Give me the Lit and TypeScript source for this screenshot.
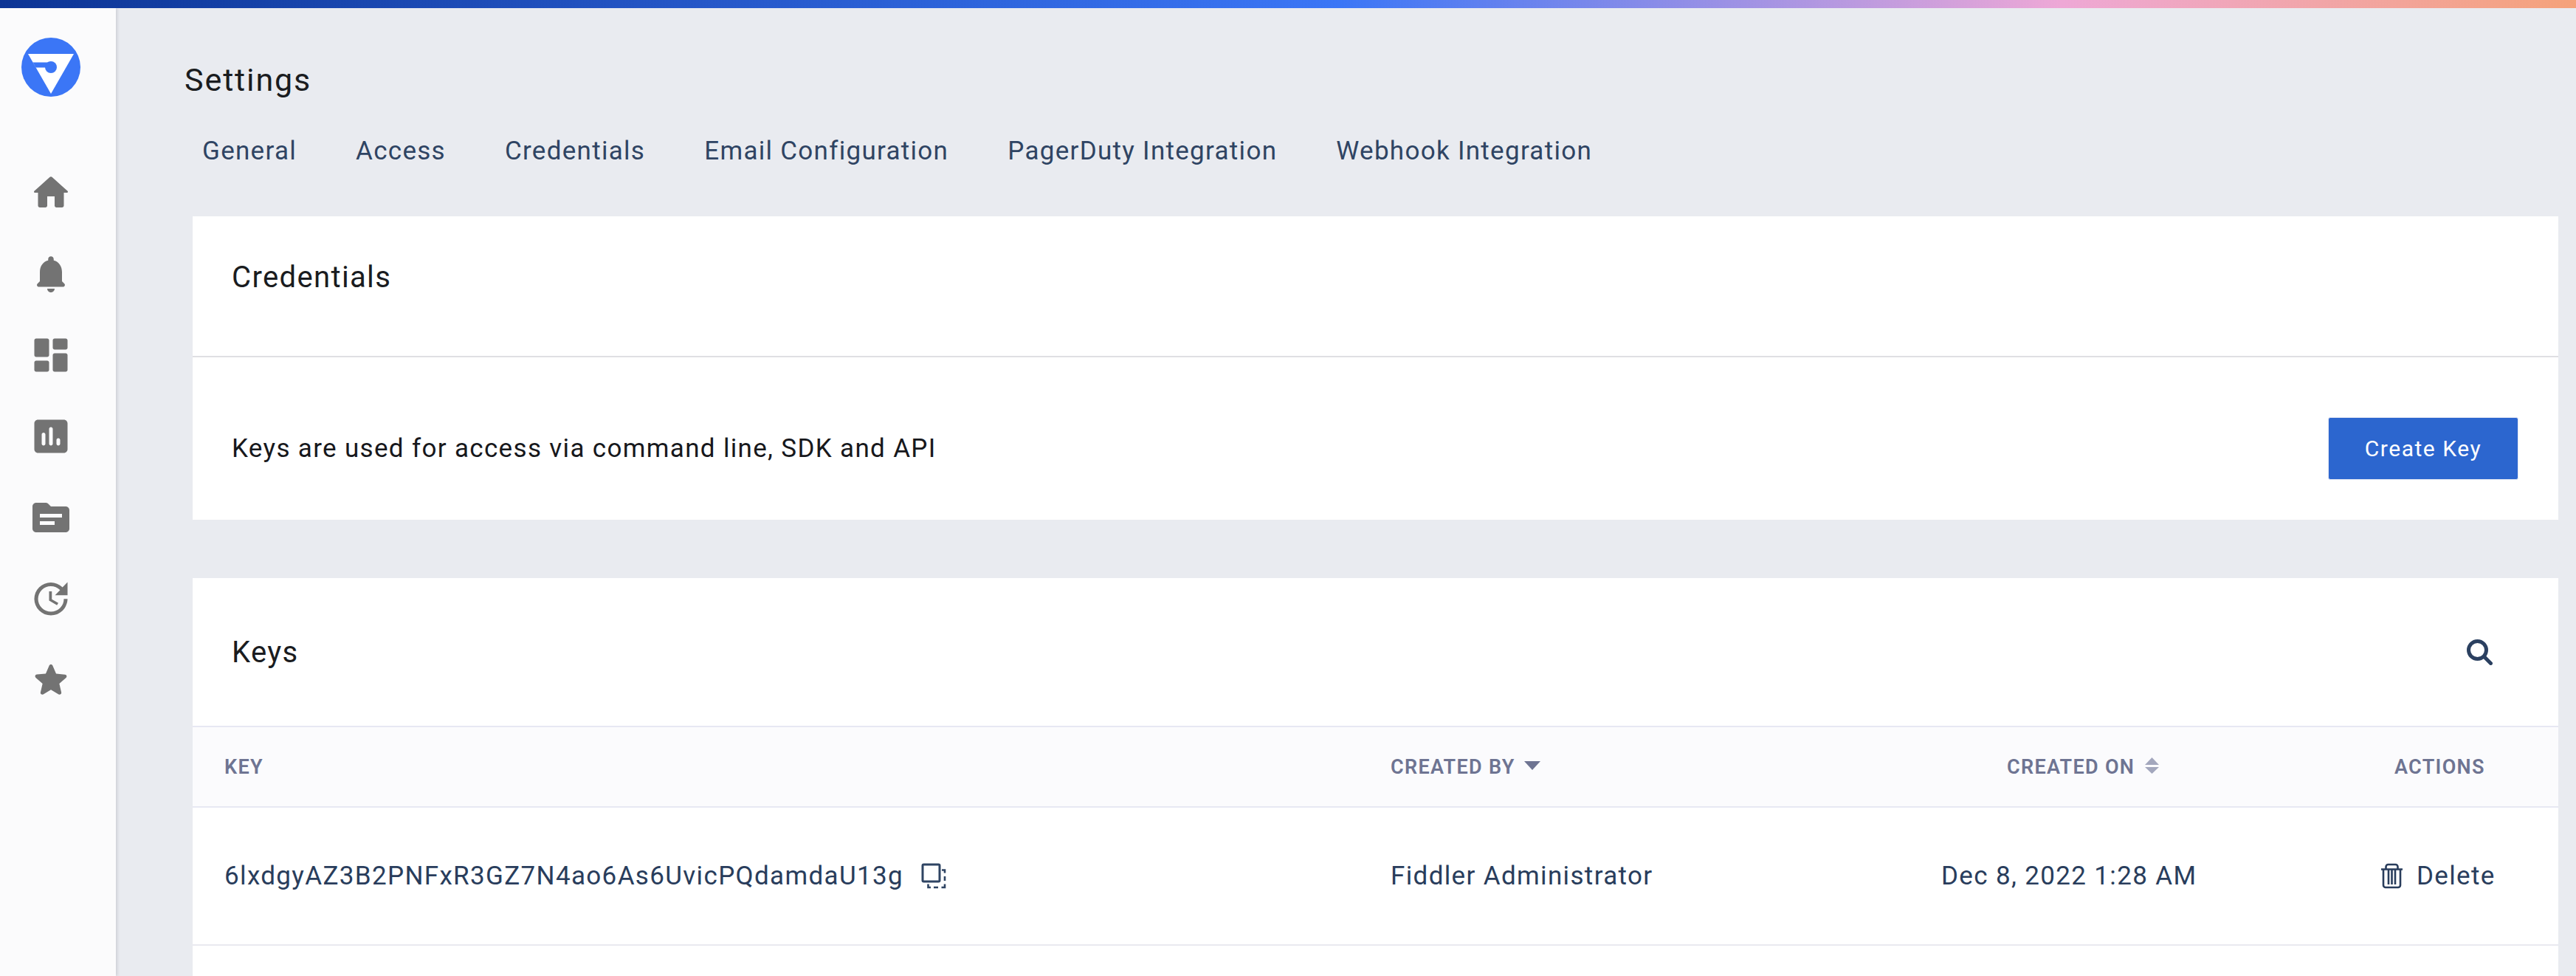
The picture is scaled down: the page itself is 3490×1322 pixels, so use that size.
import { LitElement, html, css } from 'lit';
import { customElement } from 'lit/decorators.js';

// material rounded icons for the left rail
const NAV_ICONS = [
  "M10 19v-5h4v5c0 .55.45 1 1 1h3c.55 0 1-.45 1-1v-7h1.7c.46 0 .68-.57.33-.87L12.67 3.6c-.38-.34-.96-.34-1.34 0l-8.36 7.53c-.34.3-.13.87.33.87H5v7c0 .55.45 1 1 1h3c.55 0 1-.45 1-1z",
  "M12 22c1.1 0 2-.9 2-2h-4c0 1.1.9 2 2 2zm6-6v-5c0-3.07-1.63-5.64-4.5-6.32V4c0-.83-.67-1.5-1.5-1.5s-1.5.67-1.5 1.5v.68C7.64 5.36 6 7.92 6 11v5l-1.29 1.29c-.63.63-.19 1.71.7 1.71h13.17c.89 0 1.34-1.08.71-1.71L18 16z",
  "M4 13h6c.55 0 1-.45 1-1V4c0-.55-.45-1-1-1H4c-.55 0-1 .45-1 1v8c0 .55.45 1 1 1zm0 8h6c.55 0 1-.45 1-1v-4c0-.55-.45-1-1-1H4c-.55 0-1 .45-1 1v4c0 .55.45 1 1 1zm10 0h6c.55 0 1-.45 1-1v-8c0-.55-.45-1-1-1h-6c-.55 0-1 .45-1 1v8c0 .55.45 1 1 1zM13 4v4c0 .55.45 1 1 1h6c.55 0 1-.45 1-1V4c0-.55-.45-1-1-1h-6c-.55 0-1 .45-1 1z",
  "M19 3H5c-1.1 0-2 .9-2 2v14c0 1.1.9 2 2 2h14c1.1 0 2-.9 2-2V5c0-1.1-.9-2-2-2zM8 17c-.55 0-1-.45-1-1v-5c0-.55.45-1 1-1s1 .45 1 1v5c0 .55-.45 1-1 1zm4 0c-.55 0-1-.45-1-1V8c0-.55.45-1 1-1s1 .45 1 1v8c0 .55-.45 1-1 1zm4 0c-.55 0-1-.45-1-1v-2c0-.55.45-1 1-1s1 .45 1 1v2c0 .55-.45 1-1 1z",
  "M20 6h-8l-1.41-1.41C10.21 4.21 9.7 4 9.17 4H4c-1.1 0-1.99.9-1.99 2L2 18c0 1.1.9 2 2 2h16c1.1 0 2-.9 2-2V8c0-1.1-.9-2-2-2zM6 10h12v2H6zM6 14h8v2H6z",
  "M21 10.12h-6.78l2.74-2.82c-2.73-2.7-7.15-2.8-9.88-.1-2.73 2.71-2.73 7.08 0 9.79s7.15 2.71 9.88 0C18.32 15.65 19 14.08 19 12.1h2c0 1.98-.88 4.55-2.64 6.29-3.51 3.48-9.21 3.48-12.72 0-3.5-3.47-3.53-9.11-.02-12.58s9.14-3.47 12.65 0L21 3v7.12zM12.5 8v4.25l3.5 2.08-.72 1.21L11 13V8h1.5z",
  "M12 17.27l4.15 2.51c.76.46 1.69-.22 1.49-1.08l-1.1-4.72 3.67-3.18c.67-.58.31-1.68-.57-1.75l-4.83-.41-1.89-4.46c-.34-.81-1.5-.81-1.84 0L9.19 8.63l-4.83.41c-.88.07-1.24 1.17-.57 1.75l3.67 3.18-1.1 4.72c-.2.86.73 1.54 1.49 1.08l4.15-2.5z",
];

const TABS = ["General", "Access", "Credentials", "Email Configuration", "PagerDuty Integration", "Webhook Integration"];

@customElement('app-root')
export class AppRoot extends LitElement {
  static styles = css`
    :host {
      display: block;
      width: 3490px;
      height: 1322px;
      overflow: hidden;
      background: #e9ebf0;
      font-family: Roboto, "Liberation Sans", sans-serif;
      color: #293d5c;
    }
    .topbar {
      height: 11px;
      background: linear-gradient(90deg, #0d3595 0%, #3b76f6 52%, #eea8d6 80%, #f5a27a 100%);
    }
    .shell { display: flex; height: 1311px; overflow: hidden; }

    .rail {
      width: 157px;
      flex: none;
      background: #fbfbfc;
      box-shadow: 2px 0 4px rgba(60, 64, 80, .16);
      display: flex;
      flex-direction: column;
      align-items: center;
      padding: 40px 19px 0 0;
      box-sizing: border-box;
      gap: 50px;
    }
    .logo { width: 80px; height: 80px; margin-bottom: 50px; }
    .nav-icon { width: 60px; height: 60px; fill: #737373; }

    .main { flex: 1; padding: 73px 24px 0 104px; min-width: 0; }
    .page-title {
      margin: 0 0 0 -11px;
      font-size: 43px;
      line-height: 48px;
      font-weight: 400;
      letter-spacing: 1.9px;
      color: #1a1c20;
    }
    .tabs { display: flex; gap: 80px; margin: 52px 0 0 13px; height: 109px; }
    .tab { font-size: 35px; line-height: 42px; letter-spacing: 1.29px; color: #2f4463; }

    .card { background: #fff; }
    .card + .card { margin-top: 79px; }
    .card-head {
      height: 191px;
      box-sizing: border-box;
      display: flex;
      align-items: center;
      padding: 0 53px 24px;
      border-bottom: 2px solid #dfdfe3;
    }
    .card-title { font-size: 40px; letter-spacing: 1.36px; color: #1a1c20; font-weight: 400; margin: 0; }
    .info {
      height: 220px;
      box-sizing: border-box;
      display: flex;
      align-items: center;
      justify-content: space-between;
      padding: 26px 54px 0 53px;
      font-size: 35px;
      letter-spacing: 1.33px;
      color: #17181c;
    }
    .btn {
      width: 258px;
      height: 85px;
      border: 1px solid #e4e8f4;
      border-radius: 3px;
      background: #2c66cf;
      color: #fff;
      font-family: inherit;
      font-size: 30px;
      letter-spacing: 1.55px;
    }
    .keys-head {
      height: 200px;
      display: flex;
      align-items: center;
      justify-content: space-between;
      padding: 0 89px 0 53px;
      border-bottom: 2px solid #e7e8f3;
    }
    .search { width: 35px; height: 35px; fill: none; stroke: #2b4060; stroke-width: 5; stroke-linecap: round; }

    .row {
      display: grid;
      grid-template-columns: 1623px 716px 600px 266px;
      align-items: center;
    }
    .row.header {
      height: 107px;
      background: #fbfbfd;
      border-bottom: 2px solid #e7e8f3;
      font-size: 27px;
      font-weight: 600;
      letter-spacing: 1.3px;
      color: #6e7492;
    }
    .row.body {
      height: 185px;
      border-bottom: 2px solid #e9e9f0;
      font-size: 35px;
      letter-spacing: 1.35px;
    }
    .row-blank { height: 60px; }
    .c1 { padding-left: 43px; display: flex; align-items: center; }
    .c2-head { display: flex; align-items: center; }
    .c3-head { padding-left: 119px; display: flex; align-items: center; }
    .c3-body { padding-left: 30px; }
    .c4-head { padding-left: 44px; }
    .c4-body { padding-left: 25px; display: flex; align-items: center; gap: 18px; }
    .copy { width: 36px; height: 36px; margin-left: 24px; fill: none; stroke: #2f4463; stroke-width: 2.6; }
    .trash { width: 31px; height: 35px; fill: none; stroke: #293d5c; stroke-width: 2.6; }
    .caret { width: 22px; height: 12px; margin-left: 12px; margin-top: -4px; }
    .sort { width: 19px; height: 22px; margin-left: 14px; margin-top: -4px; }
  `;

  private navIcon(d: string) {
    return html`<svg class="nav-icon" viewBox="0 0 24 24"><path fill-rule="evenodd" d=${d}></path></svg>`;
  }

  render() {
    return html`
      <div class="topbar"></div>
      <div class="shell">
        <nav class="rail">
          <svg class="logo" viewBox="0 0 80 80">
            <circle cx="40" cy="40" r="40" fill="#3b76f6"></circle>
            <path d="M9 22h62L40 76z" fill="#fff"></path>
            <path d="M15.5 33.4H38v7H19.5z" fill="#3b76f6"></path>
            <circle cx="40" cy="40" r="8" fill="#3b76f6"></circle>
          </svg>
          ${NAV_ICONS.map((d) => this.navIcon(d))}
        </nav>
        <main class="main">
          <h1 class="page-title">Settings</h1>
          <div class="tabs">
            ${TABS.map((t) => html`<span class="tab">${t}</span>`)}
          </div>
          <section class="card">
            <div class="card-head"><h2 class="card-title">Credentials</h2></div>
            <div class="info">
              <span>Keys are used for access via command line, SDK and API</span>
              <button class="btn">Create Key</button>
            </div>
          </section>
          <section class="card">
            <div class="keys-head">
              <h2 class="card-title">Keys</h2>
              <svg class="search" viewBox="0 0 35 35">
                <circle cx="14.5" cy="14.5" r="12"></circle>
                <path d="M23.5 23.5L32.5 32.5"></path>
              </svg>
            </div>
            <div class="row header">
              <div class="c1">KEY</div>
              <div class="c2-head">CREATED BY
                <svg class="caret" viewBox="0 0 22 12"><path d="M0 0h22L11 12z" fill="#6e7492"></path></svg>
              </div>
              <div class="c3-head">CREATED ON
                <svg class="sort" viewBox="0 0 19 22">
                  <path d="M9.5 0L19 10H0z" fill="#a3a7bd"></path>
                  <path d="M9.5 22L19 13H0z" fill="#a3a7bd"></path>
                </svg>
              </div>
              <div class="c4-head">ACTIONS</div>
            </div>
            <div class="row body">
              <div class="c1">6lxdgyAZ3B2PNFxR3GZ7N4ao6As6UvicPQdamdaU13g
                <svg class="copy" viewBox="0 0 36 36">
                  <rect x="2" y="2" width="23" height="23" rx="1.5" stroke-width="3"></rect>
                  <path d="M28 9.5h4v4M32 18v6M32 28.5V33h-4.5M23 33h-6M13 33H9.5v-4.5"></path>
                </svg>
              </div>
              <div>Fiddler Administrator</div>
              <div class="c3-body">Dec 8, 2022 1:28 AM</div>
              <div class="c4-body">
                <svg class="trash" viewBox="0 0 31 35">
                  <path d="M1 8.5H30M7.5 8.5V5a3 3 0 0 1 3-3h10a3 3 0 0 1 3 3V8.5M4 8.5V30a3 3 0 0 0 3 3h17a3 3 0 0 0 3-3V8.5M11 9v20M15.5 9v20M20 9v20"></path>
                </svg>
                <span>Delete</span>
              </div>
            </div>
            <div class="row-blank"></div>
          </section>
        </main>
      </div>
    `;
  }
}
